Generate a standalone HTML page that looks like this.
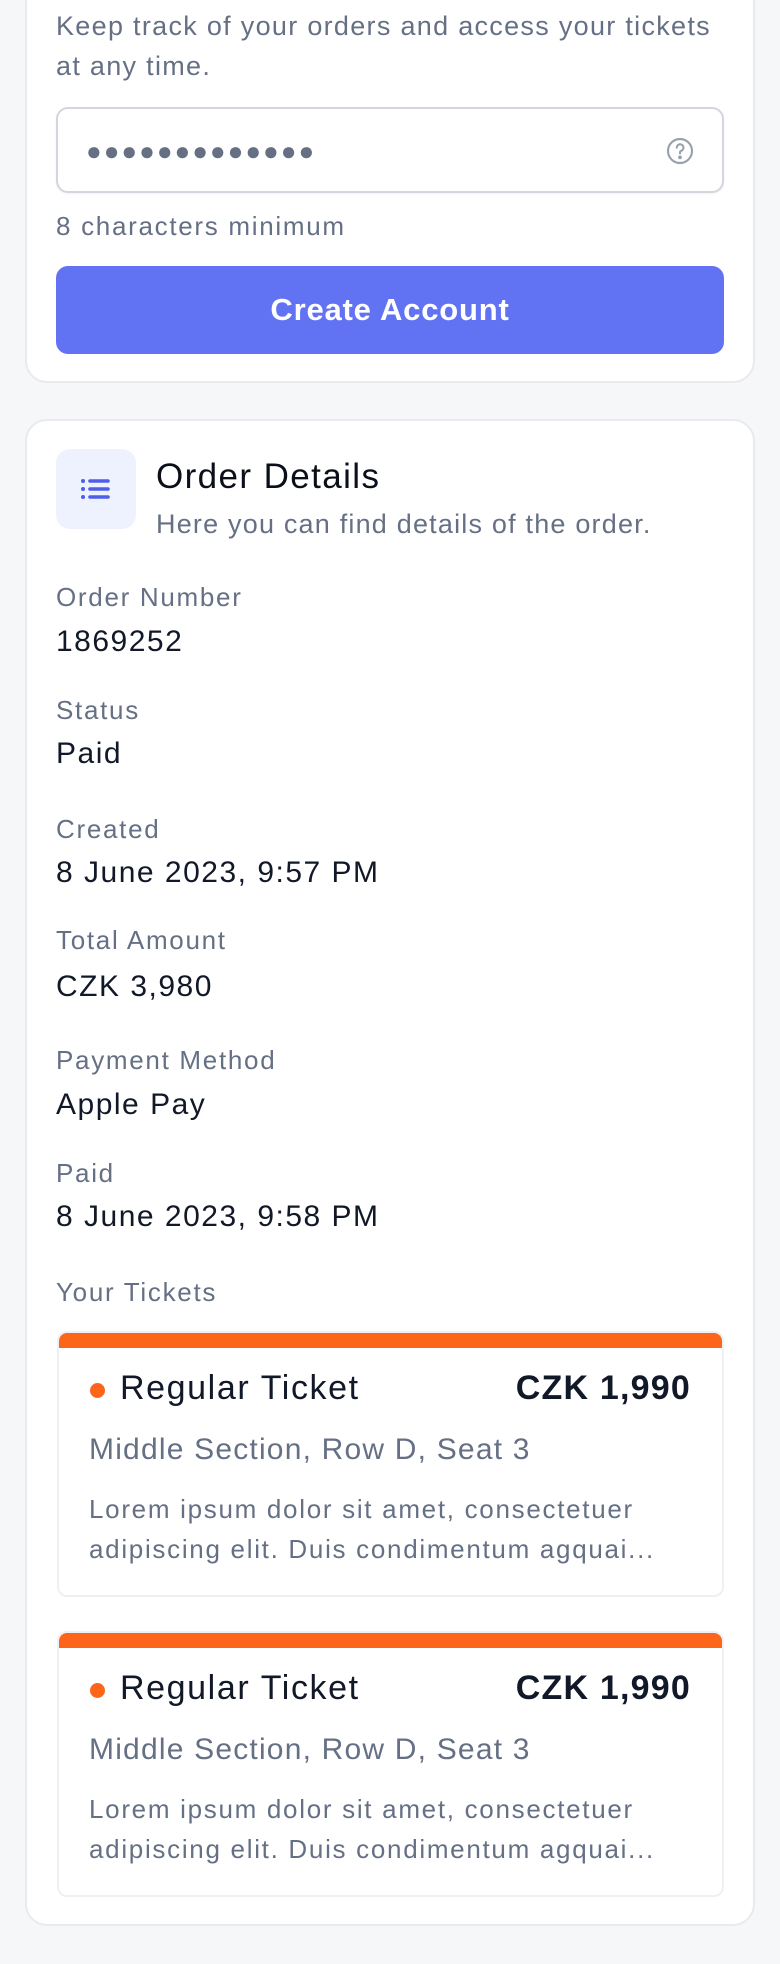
<!DOCTYPE html>
<html><head><meta charset="utf-8"><style>
*{box-sizing:border-box;margin:0;padding:0}
body{width:780px;height:1964px;background:#f6f7f9;font-family:"Liberation Sans",sans-serif;position:relative;overflow:hidden}
.abs{position:absolute;white-space:nowrap}
.card{position:absolute;left:25px;width:730px;background:#fff;border:2px solid #e8eaee;border-radius:22px}
.lbl{position:absolute;left:56px;font-size:26px;letter-spacing:1.7px;color:#667085;line-height:30px}
.val{position:absolute;left:56px;font-size:30px;letter-spacing:1.5px;color:#111827;line-height:34px}
.tk{position:absolute;left:57px;width:667px;height:266px;background:#fff;border:2px solid #eef0f3;border-radius:10px;overflow:hidden}
.tk .bar{height:15px;background:#fd661a}
.tk .dot{position:absolute;left:31px;top:50px;width:15px;height:15px;border-radius:50%;background:#fd661a}
.tk .name{position:absolute;left:61px;top:36px;font-size:34px;letter-spacing:1.6px;color:#111827}
.tk .price{position:absolute;right:31px;top:36px;font-size:34px;letter-spacing:1.2px;font-weight:bold;color:#111827}
.tk .sec{position:absolute;left:30px;top:100px;font-size:30px;letter-spacing:1.2px;color:#667085}
.tk .desc{position:absolute;left:30px;top:156px;font-size:26px;letter-spacing:1.7px;line-height:40px;color:#667085;white-space:nowrap}
</style></head><body>
<div class="card" style="top:-40px;height:423px"></div>
<div class="abs" style="left:56px;top:6px;font-size:27px;letter-spacing:1.3px;line-height:40px;color:#667085">Keep track of your orders and access your tickets<br>at any time.</div>
<div class="abs" style="left:56px;top:107px;width:668px;height:86px;border:2px solid #d3d6dc;border-radius:12px;background:#fff;box-shadow:0 1px 2px rgba(0,0,0,.05)"></div>
<div class="abs" style="left:86px;top:136px;font-size:26px;letter-spacing:2px;color:#667085">●●●●●●●●●●●●●</div>
<svg class="abs" style="left:664px;top:135px" width="32" height="32" viewBox="0 0 24 24" fill="none" stroke="#9aa0ad" stroke-width="1.6"><circle cx="12" cy="12" r="9"/><path d="M9.6 9.5a2.5 2.5 0 1 1 3.4 2.3c-.7.3-1 .8-1 1.5v.5" stroke-linecap="round"/><circle cx="12" cy="16.8" r=".6" fill="#9aa0ad"/></svg>
<div class="abs" style="left:56px;top:211px;font-size:26px;letter-spacing:1.7px;line-height:30px;color:#667085">8 characters minimum</div>
<div class="abs" style="left:56px;top:266px;width:668px;height:88px;border-radius:12px;background:#6173f3;color:#fff;font-size:31px;letter-spacing:0.8px;font-weight:bold;text-align:center;line-height:88px">Create Account</div>

<div class="card" style="top:419px;height:1507px"></div>
<div class="abs" style="left:56px;top:449px;width:80px;height:80px;border-radius:14px;background:#eef2ff"></div>
<svg class="abs" style="left:72px;top:465px" width="48" height="48" viewBox="0 0 24 24" fill="none" stroke="#4f5de8" stroke-width="1.8" stroke-linecap="round"><path d="M9 8h9M9 12h9M9 16h9"/><path d="M5.5 8h.01M5.5 12h.01M5.5 16h.01" stroke-width="2"/></svg>
<div class="abs" style="left:156px;top:457px;font-size:35px;letter-spacing:1.4px;color:#0b0f19">Order Details</div>
<div class="abs" style="left:156px;top:509px;font-size:27px;letter-spacing:1.2px;color:#667085">Here you can find details of the order.</div>
<div class="lbl" style="top:582px">Order Number</div><div class="val" style="top:625px">1869252</div>
<div class="lbl" style="top:695px">Status</div><div class="val" style="top:737px">Paid</div>
<div class="lbl" style="top:814px">Created</div><div class="val" style="top:856px">8 June 2023, 9:57 PM</div>
<div class="lbl" style="top:925px">Total Amount</div><div class="val" style="top:970px">CZK 3,980</div>
<div class="lbl" style="top:1045px">Payment Method</div><div class="val" style="top:1088px">Apple Pay</div>
<div class="lbl" style="top:1158px">Paid</div><div class="val" style="top:1200px">8 June 2023, 9:58 PM</div>
<div class="lbl" style="top:1277px">Your Tickets</div>

<div class="tk" style="top:1331px"><div class="bar"></div><div class="dot"></div><div class="name">Regular Ticket</div><div class="price">CZK 1,990</div><div class="sec">Middle Section, Row D, Seat 3</div><div class="desc">Lorem ipsum dolor sit amet, consectetuer<br>adipiscing elit. Duis condimentum agquai...</div></div>
<div class="tk" style="top:1631px"><div class="bar"></div><div class="dot"></div><div class="name">Regular Ticket</div><div class="price">CZK 1,990</div><div class="sec">Middle Section, Row D, Seat 3</div><div class="desc">Lorem ipsum dolor sit amet, consectetuer<br>adipiscing elit. Duis condimentum agquai...</div></div>
</body></html>
